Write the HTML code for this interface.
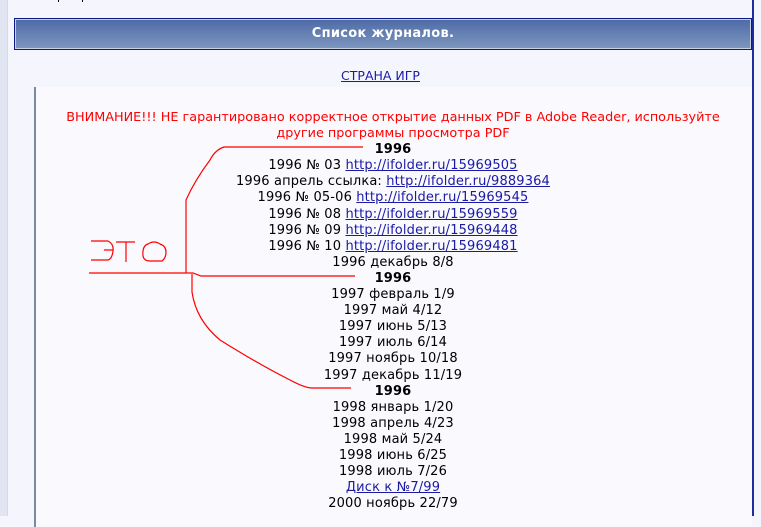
<!DOCTYPE html>
<html><head><meta charset="utf-8"><style>
body{margin:0;width:761px;height:516px;overflow:hidden;background:#f5f6fd;font-family:"DejaVu Sans","Liberation Sans",sans-serif;font-size:13px;position:relative}
.ls{position:absolute;left:0;top:0;width:7px;height:516px;background:#e1e5f1;border-right:1px solid #d4d9e8}
.rs{position:absolute;left:752px;top:0;width:2px;height:516px;background:#1f2f9a}
.hd{position:absolute;left:14px;top:18px;width:736px;height:30px;border:1px solid #0a1a8a;box-shadow:inset 0 0 0 1px #c8d0e4;background:linear-gradient(#4d6aa6,#7e97bf);color:#fff;font-weight:bold;font-size:13px;text-align:center;line-height:30px;letter-spacing:0.3px}
.si{position:absolute;left:0;width:761px;top:68px;text-align:center;font-size:12.5px}
a{color:#1a1aa6;text-decoration:underline}
.panel{position:absolute;left:34px;top:87px;width:716px;height:440px;background:#f9f9fe;border-left:2px solid #7a8aa2}
.c{position:absolute;left:36px;width:714px;top:110px;text-align:center;line-height:16.1px;letter-spacing:0.15px}
.red{color:#f00;letter-spacing:0;font-size:12.8px}
b{color:#000}
svg{position:absolute;left:0;top:0}
</style></head><body>
<div class="ls"></div>
<div class="rs"></div>
<div style="position:absolute;left:58px;top:-6px;width:1px;height:8px;background:#000"></div>
<div style="position:absolute;left:82px;top:-6px;width:1px;height:8px;background:#000"></div>
<div class="hd">Список журналов.</div>
<div class="si"><a>СТРАНА ИГР</a></div>
<div class="panel"></div>
<div class="c">
<div class="red">ВНИМАНИЕ!!! НЕ гарантировано корректное открытие данных PDF в Adobe Reader, используйте<br>другие программы просмотра PDF</div>
<b>1996</b><br>
1996 № 03 <a>http://ifolder.ru/15969505</a><br>
1996 апрель ссылка: <a>http://ifolder.ru/9889364</a><br>
1996 № 05-06 <a>http://ifolder.ru/15969545</a><br>
1996 № 08 <a>http://ifolder.ru/15969559</a><br>
1996 № 09 <a>http://ifolder.ru/15969448</a><br>
1996 № 10 <a>http://ifolder.ru/15969481</a><br>
1996 декабрь 8/8<br>
<b>1996</b><br>
1997 февраль 1/9<br>
1997 май 4/12<br>
1997 июнь 5/13<br>
1997 июль 6/14<br>
1997 ноябрь 10/18<br>
1997 декабрь 11/19<br>
<b>1996</b><br>
1998 январь 1/20<br>
1998 апрель 4/23<br>
1998 май 5/24<br>
1998 июнь 6/25<br>
1998 июль 7/26<br>
<a>Диск к №7/99</a><br>
2000 ноябрь 22/79
</div>
<svg width="761" height="516" fill="none" stroke="#f00" stroke-width="1.2">
<path d="M363 147 H224 Q215 150 210 160 Q195 180 186 200 V273"/>
<path d="M89 273 H193 L201 276 H355"/>
<path d="M192 274 V292 Q196 320 220 340 Q260 365 290 380 Q305 388 312 388 H351"/>
<path d="M91 241 H108 Q114 244 113 251 Q112 259 108 260 H91 M104 250 H113"/>
<path d="M116 242 H135 M126 242 V262"/>
<path d="M148 244 Q142 246 143 256 Q144 261 150 261 H162 Q166 258 166 252 Q166 246 160 244 Q154 240 148 244Z"/>
</svg>
</body></html>
